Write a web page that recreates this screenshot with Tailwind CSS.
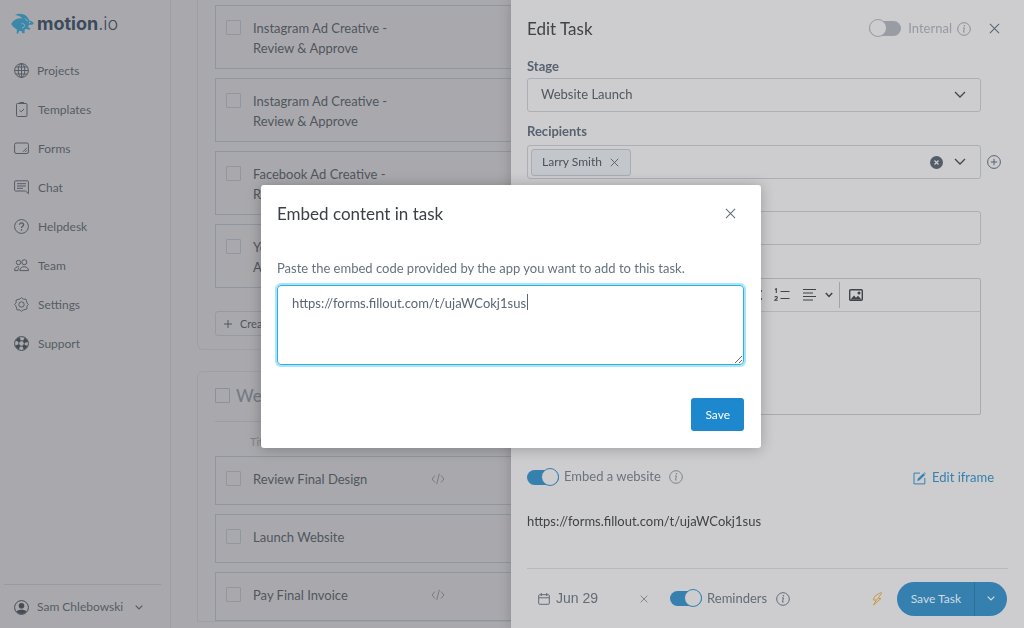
<!DOCTYPE html>
<html lang="en">
<head>
  <meta charset="UTF-8" />
  <meta name="viewport" content="width=device-width, initial-scale=1.0" />
  <title>motion.io - Edit Task</title>
  <script src="https://cdn.jsdelivr.net/npm/@tailwindcss/browser@4"></script>
</head>
<body class="bg-[#a9a9ad] text-[#50565d] font-['Lato',sans-serif] text-[13px]">
  <!-- Shared icons -->
  <svg class="hidden">
    <symbol id="x" viewBox="0 0 12 12"><path d="M1 1l10 10M11 1L1 11" fill="none" stroke="currentColor" stroke-width="1.1" /></symbol>
    <symbol id="down" viewBox="0 0 12 8"><path d="M1 1l5 5 5-5" fill="none" stroke="currentColor" stroke-width="1.3" /></symbol>
    <symbol id="down-sm" viewBox="0 0 8 5"><path d="M.7.700L4 4 7.300.7" fill="none" stroke="currentColor" stroke-width="1.200" /></symbol>
    <symbol id="info" viewBox="0 0 14 14"><circle cx="7" cy="7" r="6.3" fill="none" stroke="currentColor" /><path d="M6 5.9h1.4l-.9 4.2h1.1" fill="none" stroke="currentColor" stroke-width="1" /><circle cx="7.4" cy="3.8" r=".8" fill="currentColor" /></symbol>
    <symbol id="code" viewBox="0 0 14 12"><path d="M4 2.500L1 6l3 3.500M10 2.500L13 6l-3 3.500M8.300.8L5.700 11.200" fill="none" stroke="currentColor" stroke-width="1" /></symbol>
  </svg>

  <div class="flex h-screen overflow-hidden">
    <!-- Sidebar -->
    <aside class="flex w-[171px] shrink-0 flex-col border-r border-[#9d9fa3] text-[12px] text-[#555c65]">
      <a href="#" class="flex h-[51px] items-center gap-[3px] pl-[11px] pb-[3px] text-[#3d4a5c]">
        <svg class="h-[22px] w-[23px] shrink-0" viewBox="0 0 23 22">
          <path fill="#3c88aa" d="M4 2C8-.3 14 .4 17 5l1.500 2.700c2 .3 4 1.300 4.300 2.600-.4 1.300-2.300 1.700-4.300 1.500-.8.6-1 1.500-1.800 2.300l2.500 1.200c.5 1-.6 1.600-2 1.200l-2.700-.8-1 1.700.2 2.800h-2.300l-.7-2-2.500-.4-1 2.700H5.500l.5-4C2.500 14.500 1 12.500.3 11c.5-2 2.700-4 5.200-5 2-.8 4.300-.8 6.500-.2C10.300 3.700 7.500 2.700 4 2z" />
          <path fill="none" stroke="#9fb0b9" stroke-width=".9" d="M10.500 10.800c1.500-.7 3 .3 3 1.700 0 1.500-1 2.200-2.500 2.500M14 5.500l3 3" />
          <circle cx="18.700" cy="9.700" r=".6" fill="#b5c3c9" />
        </svg>
        <span class="font-['Inter',sans-serif] text-[18px] leading-6 font-bold">motion<span class="font-light">.io</span></span>
      </a>
      <nav class="flex flex-col">
        <a href="#" class="flex h-[39px] items-center gap-2 pl-[14px]">
          <svg class="size-[15px]" viewBox="0 0 15 15" fill="none" stroke="currentColor"><circle cx="7.500" cy="7.500" r="6.900" /><ellipse cx="7.500" cy="7.500" rx="3.300" ry="6.900" /><path d="M7.500.6v13.800M.6 7.500h13.800M1.700 4h11.600M1.700 11h11.600" /></svg>
          Projects
        </a>
        <a href="#" class="flex h-[39px] items-center gap-[9px] pl-[14px]">
          <svg class="size-[15px]" viewBox="0 0 15 15" fill="none" stroke="currentColor"><rect x="2.500" y="1.500" width="10.500" height="13" rx="1" /><path d="M5.500 0h4.500v2H5.500z" fill="currentColor" stroke="none" /><path d="M5.500 8.200l1.700 1.600L10 7" /></svg>
          Templates
        </a>
        <a href="#" class="flex h-[39px] items-center gap-[9px] pl-[14px]">
          <svg class="size-[15px]" viewBox="0 0 15 15" fill="none" stroke="currentColor"><rect x=".6" y="2" width="13.800" height="10.500" rx="1.500" /><path d="M9 10.800l3.800-3.900M11.300 10.800l1.500-1.500" /></svg>
          Forms
        </a>
        <a href="#" class="flex h-[39px] items-center gap-[9px] pl-[14px]">
          <svg class="size-[15px]" viewBox="0 0 15 15" fill="none" stroke="currentColor"><path d="M1.500.8h12c.5 0 .9.4.9.9v12L11.500 11h-10c-.5 0-.9-.4-.9-.9V1.700c0-.5.4-.9.900-.9zM3 3.700h9M3 6h9M3 8.300h6" /></svg>
          Chat
        </a>
        <a href="#" class="flex h-[39px] items-center gap-[9px] pl-[14px]">
          <svg class="size-[15px]" viewBox="0 0 15 15" fill="none" stroke="currentColor"><circle cx="7.500" cy="7.500" r="6.900" /><path d="M5.500 5.800c0-2.500 4.100-2.500 4.100 0 0 1.500-2.100 1.400-2.100 3.200" stroke-width="1.300" /><circle cx="7.500" cy="10.900" r=".8" fill="currentColor" stroke="none" /></svg>
          Helpdesk
        </a>
        <a href="#" class="flex h-[39px] items-center gap-[9px] pl-[14px]">
          <svg class="size-[15px]" viewBox="0 0 15 15" fill="none" stroke="currentColor"><circle cx="4.500" cy="4.500" r="2.200" /><circle cx="10.300" cy="4.200" r="2.500" /><path d="M5.800 12.600c0-5.200 8.700-5.200 8.700 0zM3.800 12.600H.6c0-2.800 1.900-4.200 4.400-3.800" /><path d="M3.800 12.600c.1-1 .4-1.800.9-2.400" /></svg>
          Team
        </a>
        <a href="#" class="flex h-[39px] items-center gap-[9px] pl-[14px]">
          <svg class="size-[15px]" viewBox="0 0 15 15" fill="none" stroke="currentColor"><circle cx="7.500" cy="7.500" r="2.700" /><path stroke-linejoin="round" d="M6.200 1.800Q7.500-.6 8.800 1.800L9.700 2.200Q12.300 1.400 12.300 3.200L12.800 5.300 13.200 6.200Q15.500 7.500 13.200 8.800L12.800 9.700Q13.700 12.600 11.800 12.300L9.700 12.800 8.800 13.200Q7.500 15.500 6.200 13.200L5.300 12.800Q2.500 13.700 2.700 11.800L2.200 9.700 1.800 8.800Q-.6 7.500 1.800 6.200L2.200 5.300Q1.400 2.400 3.200 2.700L5.300 2.200z" /></svg>
          Settings
        </a>
        <a href="#" class="flex h-[39px] items-center gap-[9px] pl-[14px]">
          <svg class="size-[15px] text-[#454c55]" viewBox="0 0 15 15" fill="none" stroke="currentColor"><circle cx="7.500" cy="7.500" r="6.900" /><circle cx="7.500" cy="7.500" r="4.700" stroke-width="3.800" stroke-dasharray="3.690 3.690" stroke-dashoffset="-1.850" /><circle cx="7.500" cy="7.500" r="2.800" /></svg>
          Support
        </a>
      </nav>
      <div class="mt-auto mr-[9px] ml-1 border-t border-[#979a9e] pt-[10px] pb-[9px]">
        <button type="button" class="flex h-6 items-center gap-2 pl-[10px]">
          <svg class="size-[15px]" viewBox="0 0 15 15"><circle cx="7.500" cy="7.500" r="6.900" fill="none" stroke="#454c55" /><circle cx="7.500" cy="5.700" r="2.800" fill="#454c55" /><path fill="#454c55" d="M2.500 11.300c2-2 8-2 10 0-2.500 3.500-7.500 3.500-10 0z" /></svg>
          Sam Chlebowski
          <svg class="ml-1 h-[5px] w-2"><use href="#down-sm" /></svg>
        </button>
      </div>
    </aside>

    <!-- Task list -->
    <main class="flex flex-1 flex-col gap-[21px] overflow-hidden pl-[26px] text-[13px] leading-5">
      <section class="flex flex-col gap-[9px] rounded-b-md border border-t-0 border-[#9fa0a4] pt-[5px] pb-[13px] pl-[17px]">
        <label class="flex h-16 gap-3 border border-[#8e979f] pt-3 pl-[10px]">
          <input type="checkbox" class="mt-[2px] size-[15px] shrink-0 appearance-none rounded-[1px] border border-[#92979d]" />
          <span>Instagram Ad Creative -<br />Review &amp; Approve</span>
        </label>
        <label class="flex h-16 gap-3 border border-[#8e979f] pt-3 pl-[10px]">
          <input type="checkbox" class="mt-[2px] size-[15px] shrink-0 appearance-none rounded-[1px] border border-[#92979d]" />
          <span>Instagram Ad Creative -<br />Review &amp; Approve</span>
        </label>
        <label class="flex h-16 gap-3 border border-[#8e979f] pt-3 pl-[10px]">
          <input type="checkbox" class="mt-[2px] size-[15px] shrink-0 appearance-none rounded-[1px] border border-[#92979d]" />
          <span>Facebook Ad Creative -<br />Review &amp; Approve</span>
        </label>
        <label class="flex h-16 gap-3 border border-[#8e979f] pt-3 pl-[10px]">
          <input type="checkbox" class="mt-[2px] size-[15px] shrink-0 appearance-none rounded-[1px] border border-[#92979d]" />
          <span>YouTube Ad Creative -<br />Approve</span>
        </label>
        <button type="button" class="mt-[14px] flex h-[25px] w-[90px] items-center gap-2 rounded-[3px] border border-[#979a9e] pl-2 text-[11px]">
          <svg class="size-2 shrink-0" viewBox="0 0 8 8"><path d="M4 0v8M0 4h8" stroke="currentColor" /></svg>
          Create
        </button>
      </section>

      <section class="flex flex-col gap-[9px] rounded-t-md border border-[#9fa0a4] pt-[15px] pl-[17px]">
        <label class="flex h-[17px] items-center gap-[6px] text-[17px] font-medium text-[#737b84]">
          <input type="checkbox" class="size-[15px] appearance-none rounded-[1px] border border-[#8b9198]" />
          Website
        </label>
        <div class="mt-2 border-t border-[#9a9da1] pt-[10px] pl-[35px] text-[11px] text-[#7f858c]">Title</div>
        <div class="-mt-[5px] flex h-[49px] items-center border border-[#8e979f] pb-1 pl-[10px]">
          <label class="flex w-[205px] items-center gap-3"><input type="checkbox" class="size-[15px] appearance-none rounded-[1px] border border-[#92979d]" />Review Final Design</label>
          <svg class="h-3 w-[14px] text-[#777c82]"><use href="#code" /></svg>
        </div>
        <div class="flex h-[49px] items-center border border-[#8e979f] pb-1 pl-[10px]">
          <label class="flex w-[205px] items-center gap-3"><input type="checkbox" class="size-[15px] appearance-none rounded-[1px] border border-[#92979d]" />Launch Website</label>
        </div>
        <div class="flex h-[49px] items-center border border-[#8e979f] pb-1 pl-[10px]">
          <label class="flex w-[205px] items-center gap-3"><input type="checkbox" class="size-[15px] appearance-none rounded-[1px] border border-[#92979d]" />Pay Final Invoice</label>
          <svg class="h-3 w-[14px] text-[#777c82]"><use href="#code" /></svg>
        </div>
      </section>
    </main>
  </div>

  <!-- Edit task drawer -->
  <aside class="fixed inset-y-0 right-0 flex w-[513px] flex-col bg-[#cdcdcf] pr-4 pl-4 text-[#586370] shadow-[0_0_12px_#00000030]">
    <header class="flex h-[57px] items-center pr-2">
      <h1 class="mr-auto text-[17px] text-[#404347]">Edit Task</h1>
      <label class="flex items-center gap-[7px] text-[#9699a0]">
        <input type="checkbox" role="switch" class="relative h-[15px] w-8 appearance-none rounded-full bg-[#999ca3] before:absolute before:-top-[2px] before:left-0 before:size-[18px] before:rounded-full before:border before:border-[#999ca3] before:bg-[#cdcdcf]" />
        Internal
      </label>
      <svg class="ml-[5px] size-[14px] text-[#8b8f96]"><use href="#info" /></svg>
      <button type="button" aria-label="Close panel" class="ml-[18px]"><svg class="size-[11px]"><use href="#x" /></svg></button>
    </header>

    <div class="flex flex-col">
      <label for="stage" class="h-[21px] text-[13px] leading-[19px] font-bold">Stage</label>
      <div class="relative mr-[27px]">
        <select id="stage" class="block h-[34px] w-full appearance-none rounded-[3px] border border-[#aab0b5] pl-[13px] text-[13px] text-[#50575f]"><option>Website Launch</option></select>
        <svg class="pointer-events-none absolute top-[13px] right-[15px] h-2 w-3 text-[#42464b]"><use href="#down" /></svg>
      </div>
      <label for="recipients" class="mt-[10px] h-[23px] text-[13px] leading-[19px] font-bold">Recipients</label>
      <div class="flex items-center gap-[6px]">
        <div class="flex h-[34px] flex-1 items-center rounded-[3px] border border-[#aab0b5] pr-[14px] pl-[3px]">
          <span class="flex h-[27px] items-center gap-2 rounded-[3px] border border-[#a5adb5] bg-[#c3c7cb] pr-[11px] pl-[10px] text-[12px] text-[#4b525b]">Larry Smith
            <button type="button" aria-label="Remove Larry Smith"><svg class="block size-[9px]"><use href="#x" /></svg></button>
          </span>
          <input id="recipients" type="text" class="min-w-0 flex-1 outline-none" />
          <button type="button" aria-label="Clear recipients"><svg class="mr-[11px] block size-[13px]" viewBox="0 0 13 13"><circle cx="6.500" cy="6.500" r="6.500" fill="#535d69" /><path d="M4.500 4.500l4 4M8.500 4.500l-4 4" stroke="#cdcdcf" stroke-width="1.200" /></svg></button>
          <svg class="h-2 w-3 text-[#42464b]"><use href="#down" /></svg>
        </div>
        <button type="button" aria-label="Add recipient" class="mr-[7px]"><svg class="block size-[14px]" viewBox="0 0 14 14" fill="none" stroke="currentColor"><circle cx="7" cy="7" r="6.400" /><path d="M7 3.800v6.400M3.800 7h6.400" /></svg></button>
      </div>
      <input type="text" aria-label="Task title" class="mt-[32px] mr-[27px] h-[34px] rounded-[3px] border border-[#aab0b5] px-[13px]" />

      <!-- Description editor -->
      <div class="mt-[33px] mr-[27px] rounded-[2px] border border-[#a7abaf] text-[#404347]">
        <div class="flex h-[33px] items-center justify-end border-b border-[#b3b6b9] pr-[117px]">
          <button type="button" aria-label="Bulleted list"><svg class="mr-[12px] block h-4 w-[17px]" viewBox="0 0 17 16" stroke="currentColor" stroke-width="1.300"><path d="M0 4h3M6 4h11M0 12h3M6 12h11" /></svg></button>
          <button type="button" aria-label="Numbered list" class="mr-[13px]"><svg class="block h-4 w-4" viewBox="0 0 16 16" fill="none" stroke="currentColor"><path d="M6.500 4.500h9M6.500 11.500h9" stroke-width="1.200" /><path d="M1 2.500l1.300-.8V6M.8 10.300c.5-1.300 2.700-1 2.500.3-.1.900-1.700 1.600-2.500 2.600h2.900" stroke-width="1.100" /></svg></button>
          <button type="button" aria-label="Alignment" class="flex items-center gap-2"><svg class="h-4 w-[14px]" viewBox="0 0 14 16" stroke="currentColor" stroke-width="1.200"><path d="M0 2.500h13M0 6h10M0 9.500h13M0 13h10" /></svg><svg class="h-[6px] w-[8px]" viewBox="0 0 8 6"><path d="M.8 1L4 4.500 7.200 1" fill="none" stroke="currentColor" stroke-width="1.500" /></svg></button>
          <span class="mx-[6px] mr-[9px] h-[26px] w-px bg-[#a0a3a7]"></span>
          <button type="button" aria-label="Insert image" class="-mr-[117px] w-[131px]"><svg class="block h-3 w-[14px]" viewBox="0 0 14 12"><rect x=".7" y=".7" width="12.600" height="10.600" rx="1" fill="none" stroke="currentColor" stroke-width="1.400" /><path fill="currentColor" d="M1.500 10.500L5 6.500l2 2.300 2-2 3.500 3.700z" /><circle cx="10" cy="4" r="1.500" fill="currentColor" /></svg></button>
        </div>
        <textarea aria-label="Task description" class="block h-[102px] w-full resize-none p-3 outline-none"></textarea>
      </div>

      <div class="mt-[52px] flex h-5 items-center pr-[14px] text-[#6a7380]">
        <label class="flex items-center gap-[5px]">
          <input type="checkbox" role="switch" checked class="relative h-[15px] w-8 appearance-none rounded-full bg-[#3580af] before:absolute before:-top-[2px] before:right-0 before:size-[18px] before:rounded-full before:border before:border-[#3580af] before:bg-[#cdcdcf]" />
          Embed a website
        </label>
        <svg class="ml-[8px] size-[14px] text-[#7d848d]"><use href="#info" /></svg>
        <a href="#" class="mt-[2px] ml-auto flex items-center gap-[6px] text-[#3580af]">
          <svg class="size-[13px]" viewBox="0 0 13 13" fill="none" stroke="currentColor"><path d="M7 1.100H1v10.800h10.800V6" /><path d="M4.500 8.700L5 6.700 10.300 1.500l1.500 1.400L6.500 8.100z" fill="currentColor" stroke-width=".4" /><path d="M11.200.6l1.400 1.300" /></svg>
          Edit iframe
        </a>
      </div>
      <p class="mt-6 leading-5 text-[#404347]">https://forms.fillout.com/t/ujaWCokj1sus</p>
    </div>

    <footer class="mt-auto flex h-[60px] items-center border-t border-[#b9babd] text-[#626b77]">
      <button type="button" class="ml-[11px] flex items-center gap-[6px] font-['Liberation_Sans',sans-serif] text-[14px]">
        <svg class="size-3" viewBox="0 0 12 12" fill="none" stroke="currentColor"><rect x=".7" y="1.700" width="10.600" height="9.600" rx="1" /><path d="M.7 4.800h10.600M3.300 0v3.200M8.700 0v3.200" /></svg>
        Jun 29
      </button>
      <button type="button" aria-label="Clear date" class="ml-[42px]"><svg class="block size-2"><use href="#x" /></svg></button>
      <label class="ml-[22px] flex items-center gap-[5px]">
        <input type="checkbox" role="switch" checked class="relative h-[15px] w-8 appearance-none rounded-full bg-[#3580af] before:absolute before:-top-[2px] before:right-0 before:size-[18px] before:rounded-full before:border before:border-[#3580af] before:bg-[#cdcdcf]" />
        Reminders
      </label>
      <svg class="ml-[9px] size-[14px]"><use href="#info" /></svg>
      <svg class="mr-[14px] ml-auto h-[14px] w-[11px] text-[#c9994a]" viewBox="0 0 11 14" fill="none" stroke="currentColor" stroke-linejoin="round"><path d="M8.300.8L2.700 4.300 1.300 8h3L1.500 13l7.500-6.500H6.200L9.700.8zM4.300 8L6.200 6.500" /></svg>
      <div class="mr-px flex h-[34px] items-center rounded-full bg-[#3580af] text-[12px] text-[#d3dbe1]">
        <button type="button" class="h-full border-r border-[#2b6f9b] pr-[13px] pl-[14px]">Save Task</button>
        <button type="button" aria-label="More save options" class="flex h-full w-8 items-center justify-center"><svg class="h-[5px] w-2"><use href="#down-sm" /></svg></button>
      </div>
    </footer>
  </aside>

  <!-- Embed modal -->
  <div class="fixed inset-0 z-10 flex items-start justify-center pt-[185px] pr-[2px]">
    <div role="dialog" aria-labelledby="embed-title" class="w-full max-w-[500px] rounded-[3px] bg-white pr-[17px] pb-[17px] pl-4 shadow-[0_1px_14px_#00000040]">
      <div class="flex h-[57px] items-center justify-between pr-2">
        <h2 id="embed-title" class="text-[17px] text-[#3c4046]">Embed content in task</h2>
        <button type="button" aria-label="Close" class="text-[#5f6b7a]"><svg class="block size-[11px]"><use href="#x" /></svg></button>
      </div>
      <label for="embed-code" class="mt-4 block text-[13px] leading-5 text-[#66727f]">Paste the embed code provided by the app you want to add to this task.</label>
      <div class="relative mt-[7px]">
        <textarea id="embed-code" class="block h-20 w-full resize rounded-[4px] border border-[#33ace0] px-[14px] py-[7px] text-[13px] leading-5 text-[#5a6675] shadow-[0_0_0_2px_#a6e6fb] outline-none">https://forms.fillout.com/t/ujaWCokj1sus</textarea>
        <span class="absolute top-[9px] left-[250px] h-4 w-px bg-[#5a6675]"></span>
      </div>
      <button type="button" class="mt-[33px] ml-auto block h-[33px] rounded-[3px] bg-[#1e88cf] px-[14px] text-[12px] text-white">Save</button>
    </div>
  </div>
</body>
</html>
